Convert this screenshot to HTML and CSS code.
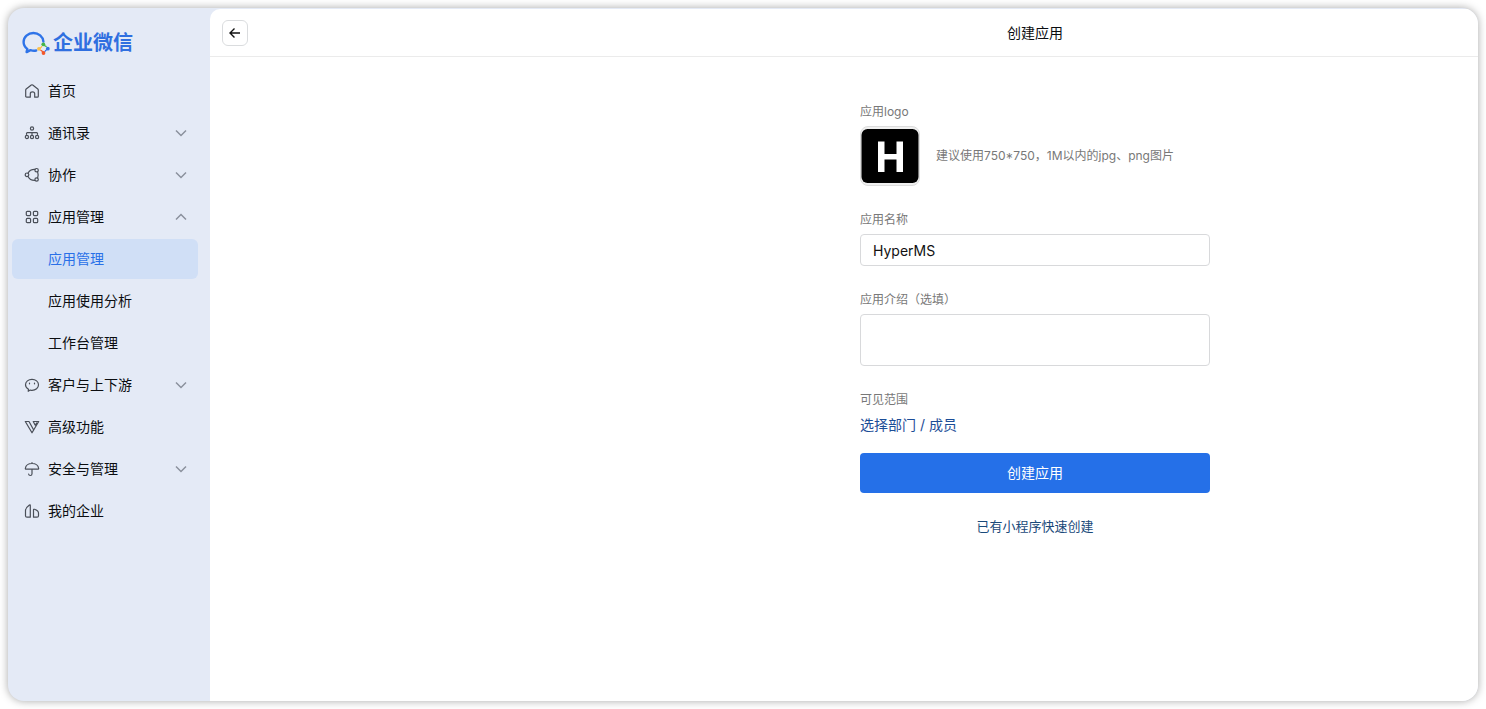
FILE: index.html
```html
<!DOCTYPE html>
<html lang="zh-CN">
<head>
<meta charset="utf-8">
<title>创建应用 - 企业微信</title>
<link rel="stylesheet" href="styles.css">
</head>
<body>
<div class="window">
  <aside class="sidebar">
    <a class="brand" href="#">
      <svg class="brand-mark" viewBox="0 0 28 24" aria-hidden="true">
        <path d="M21.4 10.6C20.9 5.6 16.6 2 11.4 2 6 2 1.6 5.900 1.600 10.900c0 3 1.500 5.400 3.700 7l-.7 3.200 3.900-2c1.700.6 3.700.8 5.700.4" fill="none" stroke="#2f74e8" stroke-width="2.400" stroke-linecap="round" stroke-linejoin="round"/>
        <circle cx="21.300" cy="13.300" r="1.900" fill="#45b649"/>
        <path d="M21.900 13.200c.6 1.400 1.500 2.200 2.800 2.500" stroke="#45b649" stroke-width="1.200" fill="none"/>
        <circle cx="25.800" cy="17.700" r="1.900" fill="#2f6fe6"/>
        <path d="M25.500 18.200c-1.500.5-2.300 1.300-2.800 2.700" stroke="#2f6fe6" stroke-width="1.200" fill="none"/>
        <circle cx="21.500" cy="22" r="1.900" fill="#f2572b"/>
        <path d="M21 21.500c-.5-1.300-1.400-2-2.600-2.400" stroke="#f2572b" stroke-width="1.200" fill="none"/>
        <circle cx="17" cy="17.800" r="1.900" fill="#fbc04a"/>
        <path d="M17.500 17.500c1.300-.5 2-1.200 2.500-2.400" stroke="#fbc04a" stroke-width="1.200" fill="none"/>
      </svg>
      <span>企业微信</span>
    </a>
    <nav class="nav">
      <a class="nav-item" href="#">
        <svg class="icon" viewBox="0 0 16 16"><path d="M1.700 7.200Q1.700 6.500 2.200 6L7.300 2q.7-.5 1.400 0l5.100 4q.5.500.5 1.200v6q0 1-1 1h-2.600V10.800q0-2-2.200-2t-2.200 2v3.400H2.700q-1 0-1-1z"/></svg>
        <span>首页</span>
      </a>
      <a class="nav-item" href="#">
        <svg class="icon" viewBox="0 0 16 16"><circle cx="8" cy="3.500" r="1.600"/><path d="M2.500 9.300V8.500q0-.9.900-.9h9.200q.9 0 .9.900v.8M8 7.600v1.900"/><circle cx="2.900" cy="12" r="1.600"/><circle cx="8" cy="12" r="1.600"/><circle cx="13.100" cy="12" r="1.600"/></svg>
        <span>通讯录</span>
        <svg class="chevron" viewBox="0 0 12 12"><path d="M1 3.500l5 5 5-5"/></svg>
      </a>
      <a class="nav-item" href="#">
        <svg class="icon" viewBox="0 0 16 16"><circle cx="3" cy="7.800" r="1.800"/><circle cx="12.600" cy="3.200" r="1.700"/><circle cx="12.600" cy="12.500" r="1.700"/><path d="M4 6.200C5.200 3.800 7.600 2.300 10.900 2.400M4 9.400c1.200 2.500 3.600 4 6.900 3.900M13.600 4.700c.7 2 .7 4.300 0 6.300"/></svg>
        <span>协作</span>
        <svg class="chevron" viewBox="0 0 12 12"><path d="M1 3.500l5 5 5-5"/></svg>
      </a>
      <a class="nav-item" href="#">
        <svg class="icon" viewBox="0 0 16 16"><rect x="2.300" y="2.300" width="4.300" height="4.300" rx="1"/><rect x="9.400" y="2.300" width="4.300" height="4.300" rx="1"/><rect x="2.300" y="9.400" width="4.300" height="4.300" rx="1"/><rect x="9.400" y="9.400" width="4.300" height="4.300" rx="1"/></svg>
        <span>应用管理</span>
        <svg class="chevron" viewBox="0 0 12 12"><path d="M1 8.500l5-5 5 5"/></svg>
      </a>
      <a class="nav-item nav-sub active" href="#"><span>应用管理</span></a>
      <a class="nav-item nav-sub" href="#"><span>应用使用分析</span></a>
      <a class="nav-item nav-sub" href="#"><span>工作台管理</span></a>
      <a class="nav-item" href="#">
        <svg class="icon" viewBox="0 0 16 16"><path d="M4.200 14.300l.3-2.100C2.600 11.200 1.500 9.600 1.500 7.800 1.500 4.700 4.400 2.300 8 2.300s6.500 2.400 6.500 5.500-2.900 5.500-6.500 5.500c-.6 0-1.200-.1-1.700-.2z"/><path d="M5.500 6v.8M10.500 6v.8"/></svg>
        <span>客户与上下游</span>
        <svg class="chevron" viewBox="0 0 12 12"><path d="M1 3.500l5 5 5-5"/></svg>
      </a>
      <a class="nav-item" href="#">
        <svg class="icon" viewBox="0 0 16 16"><path d="M1.300 2.500H5L9.700 11 8 13.800zM8 13.800l6.700-11.300H9.200L11.300 6.200 12.600 4"/></svg>
        <span>高级功能</span>
      </a>
      <a class="nav-item" href="#">
        <svg class="icon" viewBox="0 0 16 16"><path d="M1.300 7.500C1.800 4.400 4.500 2.500 8 2.500s6.200 1.900 6.700 5q0 .6-.6.600H1.900q-.6 0-.6-.6zM8 1.500v1M8 8.100v4.600q0 1.800-1.700 1.800-1.500 0-1.700-1.500"/></svg>
        <span>安全与管理</span>
        <svg class="chevron" viewBox="0 0 12 12"><path d="M1 3.500l5 5 5-5"/></svg>
      </a>
      <a class="nav-item" href="#">
        <svg class="icon" viewBox="0 0 16 16"><path d="M6.300 14.200V2.500q0-1-.9-.4Q1.500 5 1.500 7.400v5.300q0 1.500 1.500 1.500zM9.500 14.200V7q0-1 1-.7 4 1.400 4 3.600v2.800q0 1.500-1.500 1.500z"/></svg>
        <span>我的企业</span>
      </a>
    </nav>
  </aside>
  <main class="main">
    <header class="topbar">
      <button class="back" type="button" aria-label="返回">
        <svg viewBox="0 0 14 14" aria-hidden="true"><path d="M12 7H2.300M6.500 2.500L2 7l4.500 4.500"/></svg>
      </button>
      <h1 class="title">创建应用</h1>
    </header>
    <div class="content">
      <form class="form">
        <div class="field">
          <span class="label">应用logo</span>
          <div class="upload">
            <button class="logo" type="button" aria-label="应用logo">
              <svg viewBox="0 0 58 58" aria-hidden="true"><rect x="0.500" y="2" width="57" height="54" rx="6"/><path d="M17 14.500h6.500V27h12V14.500H42v30.500h-6.500V32.500h-12V45H17z" fill="#fff"/></svg>
            </button>
            <span class="hint">建议使用750*750，1M以内的jpg、png图片</span>
          </div>
        </div>
        <div class="field">
          <label class="label" for="name">应用名称</label>
          <input class="control" id="name" type="text" value="HyperMS">
        </div>
        <div class="field">
          <label class="label" for="intro">应用介绍（选填）</label>
          <textarea class="control area" id="intro"></textarea>
        </div>
        <div class="field">
          <span class="label">可见范围</span>
          <a class="picker" href="#">选择部门 / 成员</a>
        </div>
        <div class="actions">
          <button class="submit" type="submit">创建应用</button>
          <a class="quick" href="#">已有小程序快速创建</a>
        </div>
      </form>
    </div>
  </main>
</div>
</body>
</html>
```
FILE: styles.css
```css
* { box-sizing: border-box; }

body {
  margin: 0;
  padding: 8px;
  min-height: 100vh;
  display: flex;
  background: #fff;
  color: #0b0d10;
  font: 14px/20px Inter, "Noto Sans CJK SC", sans-serif;
}

a { color: inherit; text-decoration: none; }
button, input, textarea { font: inherit; }

.window {
  flex: 1;
  display: flex;
  overflow: hidden;
  border-radius: 16px;
  background: #e4eaf6;
  box-shadow: 0 0 8px rgba(0, 0, 0, 0.35);
}

.sidebar {
  flex: none;
  width: 202px;
  padding: 21px 12px 20px 4px;
}

.brand {
  display: flex;
  align-items: center;
  gap: 3px;
  height: 28px;
  margin-bottom: 14px;
  padding-left: 10px;
  color: #2f6fe0;
  font-size: 20px;
  font-weight: 700;
}

.brand-mark { width: 28px; height: 24px; }

.nav { display: flex; flex-direction: column; gap: 2px; }

.nav-item {
  display: flex;
  align-items: center;
  gap: 8px;
  height: 40px;
  padding: 0 11px 0 12px;
  border-radius: 6px;
}

.nav-sub { padding-left: 36px; }
.active { background: #d0dff6; color: #2970e8; }

.icon {
  width: 16px;
  height: 16px;
  fill: none;
  stroke: #4a4f58;
  stroke-width: 1.2;
  stroke-linecap: round;
  stroke-linejoin: round;
}

.chevron {
  width: 12px;
  height: 12px;
  margin-left: auto;
  fill: none;
  stroke: #8b919d;
  stroke-width: 1.5;
}

.main {
  flex: 1;
  min-width: 0;
  margin-top: 1px;
  border-top-left-radius: 10px;
  background: #fff;
}

.topbar {
  display: flex;
  align-items: center;
  height: 48px;
  padding-left: 12px;
  border-bottom: 1px solid #ebebeb;
}

.back {
  display: grid;
  place-items: center;
  width: 26px;
  height: 26px;
  padding: 0;
  border: 1px solid #dadcde;
  border-radius: 6px;
  background: #fff;
}

.back svg {
  width: 14px;
  height: 14px;
  fill: none;
  stroke: #111;
  stroke-width: 1.4;
}

.title {
  flex: 1;
  margin: 0;
  padding-left: 344px;
  text-align: center;
  font-size: 14px;
  font-weight: 400;
}

.content { padding: 45px 0 32px 382px; }

.form {
  display: flex;
  flex-direction: column;
  gap: 24px;
  max-width: 350px;
  margin: 0 auto;
}

.field { display: flex; flex-direction: column; gap: 4px; }
.label, .hint { color: #787878; font-size: 12px; }
.upload { display: flex; align-items: center; gap: 16px; }

.logo {
  width: 60px;
  height: 60px;
  padding: 0;
  overflow: hidden;
  border: 1px solid #dcdcdc;
  border-radius: 8px;
  background: #f0f0f0;
}

.logo svg { display: block; }

.control {
  width: 100%;
  height: 32px;
  padding: 0 12px;
  border: 1px solid #d8d9db;
  border-radius: 4px;
  background: #fff;
  color: #111;
}

.area { display: block; height: 52px; padding: 6px 12px; resize: none; }

.picker { align-self: flex-start; line-height: 22px; color: #1c4d97; }

.actions {
  display: flex;
  flex-direction: column;
  align-items: center;
  gap: 23px;
  margin-top: -7px;
}

.submit {
  width: 100%;
  height: 40px;
  border: 0;
  border-radius: 4px;
  background: #2570e8;
  color: #fff;
}

.quick { color: #1a4a7a; font-size: 13px; }
```
